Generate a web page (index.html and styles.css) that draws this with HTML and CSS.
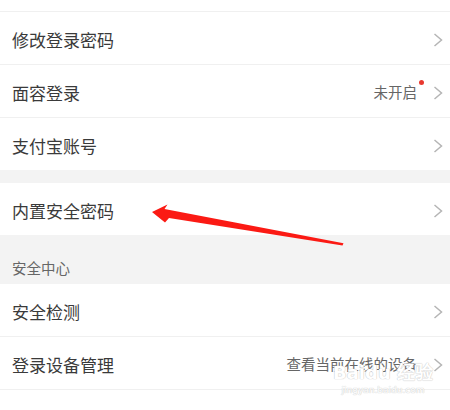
FILE: index.html
```html
<!DOCTYPE html>
<html lang="zh-CN">
<head>
<meta charset="utf-8">
<link rel="stylesheet" href="styles.css">
</head>
<body>
<div class="page">
  <div class="top"></div>
  <div class="row"><span class="label">修改登录密码</span><span class="right"><svg class="chev" viewBox="0 0 10 14"><polyline points="1.5,1 8.5,7 1.5,13"/></svg></span></div>
  <div class="row"><span class="label">面容登录</span><span class="right"><span class="value">未开启<i class="dot"></i></span><svg class="chev" viewBox="0 0 10 14"><polyline points="1.5,1 8.5,7 1.5,13"/></svg></span></div>
  <div class="row last"><span class="label">支付宝账号</span><span class="right"><svg class="chev" viewBox="0 0 10 14"><polyline points="1.5,1 8.5,7 1.5,13"/></svg></span></div>
  <div class="gap"></div>
  <div class="row last"><span class="label">内置安全密码</span><span class="right"><svg class="chev" viewBox="0 0 10 14"><polyline points="1.5,1 8.5,7 1.5,13"/></svg></span></div>
  <div class="section">安全中心</div>
  <div class="row"><span class="label">安全检测</span><span class="right"><svg class="chev" viewBox="0 0 10 14"><polyline points="1.5,1 8.5,7 1.5,13"/></svg></span></div>
  <div class="row"><span class="label">登录设备管理</span><span class="right"><span class="value">查看当前在线的设备</span><svg class="chev" viewBox="0 0 10 14"><polyline points="1.5,1 8.5,7 1.5,13"/></svg></span></div>
  <svg class="arrow" viewBox="0 0 450 410" width="450" height="410"><polygon points="152,212 167.5,204.5 164.5,209 343.5,243.3 342.5,245.5 169,218 165,222.5"/></svg>
  <div class="watermark"><span class="wm1">Bai<b>du</b> 经验</span><span class="wm2">jingyan.baidu.com</span></div>
</div>
</body>
</html>
```
FILE: styles.css
```css
* { box-sizing: border-box; }
html, body { margin: 0; padding: 0; background: #fff; }
body { font-family: "Noto Sans CJK SC", "Noto Sans", sans-serif; }
.page { position: relative; width: 450px; height: 410px; overflow: hidden; background: #fff; }
.top { height: 12px; border-bottom: 1px solid #f0f0f0; }
.row {
  height: 53px;
  display: flex;
  align-items: center;
  justify-content: space-between;
  padding: 3px 7px 0 12px;
  border-bottom: 1px solid #f0f0f0;
  background: #fff;
}
.row.last { border-bottom: none; height: 52px; }
.label { font-size: 17px; color: #3a3a3a; line-height: 1; }
.right { display: flex; align-items: center; }
.value { position: relative; font-size: 14.5px; color: #666; margin-right: 16px; line-height: 1; }
.dot { position: absolute; right: -7px; top: -5px; width: 5px; height: 5px; border-radius: 50%; background: #e8382f; }
.chev { width: 10px; height: 14px; fill: none; stroke: #b5b5b5; stroke-width: 1.5; }
.gap { height: 13px; background: #f3f3f3; }
.section {
  height: 49px;
  background: #f3f3f3;
  display: flex;
  align-items: flex-end;
  padding: 0 0 9px 12px;
  font-size: 14.5px;
  color: #666;
  line-height: 1;
}
.arrow { position: absolute; left: 0; top: 0; }
.arrow polygon { fill: #fb1a14; }
.watermark {
  position: absolute;
  left: 333px;
  top: 362px;
  display: flex;
  flex-direction: column;
  align-items: center;
  color: #fff;
  font-family: "DejaVu Sans", sans-serif;
  text-shadow: 0 0 1px #c8c8c8, 0 0 1px #c8c8c8;
}
.wm1 { font-size: 18px; font-weight: bold; line-height: 22px; }
.wm1 b { font-weight: bold; }
.wm2 { font-size: 9px; line-height: 12px; }
```
